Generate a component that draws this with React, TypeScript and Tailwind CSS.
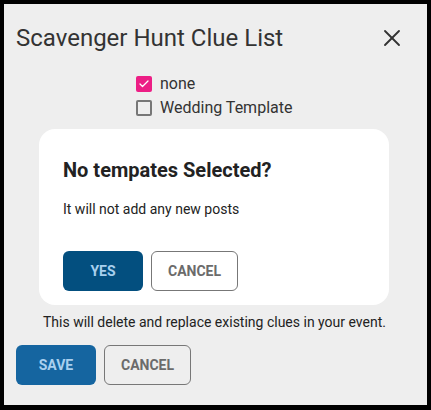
import { X, Check } from 'lucide-react'

export default function App() {
  return (
    <div className="w-[431px] h-[410px] bg-black pt-[4px] px-[4px] pb-[5px] font-['Roboto',sans-serif]">
      <div className="h-full bg-[#eeeeee] relative">
        <div className="flex items-center justify-between pl-[12px] pr-[21px] pt-[17px]">
          <h1 className="text-[24px] leading-[34px] text-[#333333]">Scavenger Hunt Clue List</h1>
          <button className="text-[#333333]">
            <X className="w-[28px] h-[28px]" strokeWidth={1.6} />
          </button>
        </div>

        <div className="flex flex-col gap-[8px] pl-[132px] mt-[21px]">
          <label className="flex items-center gap-[8px] h-[16px]">
            <span className="w-[16px] h-[16px] rounded-[2px] bg-[#ec1e85] flex items-center justify-center">
              <Check className="w-[12px] h-[12px] text-white" strokeWidth={2.5} />
            </span>
            <span className="text-[16px] text-[#333333]">none</span>
          </label>
          <label className="flex items-center gap-[8px] h-[16px]">
            <span className="w-[16px] h-[16px] rounded-[2px] border-2 border-[#777777]" />
            <span className="text-[16px] text-[#333333]">Wedding Template</span>
          </label>
        </div>

        <div className="ml-[35px] mt-[13px] w-[350px] h-[176px] bg-white rounded-[16px] px-[24px] pt-[28px]">
          <h2 className="text-[20px] leading-[26px] font-bold text-[#222222]">No tempates Selected?</h2>
          <p className="mt-[16px] text-[14px] leading-[20px] text-[#222222]">It will not add any new posts</p>
          <div className="flex gap-[8px] mt-[32px]">
            <button className="w-[80px] h-[40px] rounded-[6px] bg-[#034f7f] text-[#a8d0ee] text-[14px] font-bold">
              YES
            </button>
            <button className="w-[87px] h-[40px] rounded-[6px] border border-[#777777] text-[#6b6b6b] text-[14px] font-bold">
              CANCEL
            </button>
          </div>
        </div>

        <p className="mt-[7px] text-center text-[14px] leading-[20px] text-[#222222] pr-[2px]">
          This will delete and replace existing clues in your event.
        </p>

        <div className="flex gap-[8px] pl-[12px] mt-[13px]">
          <button className="w-[80px] h-[40px] rounded-[6px] bg-[#1565a0] text-[#a9d0ef] text-[14px] font-bold">
            SAVE
          </button>
          <button className="w-[87px] h-[40px] rounded-[6px] border border-[#777777] text-[#6b6b6b] text-[14px] font-bold">
            CANCEL
          </button>
        </div>
      </div>
    </div>
  )
}
